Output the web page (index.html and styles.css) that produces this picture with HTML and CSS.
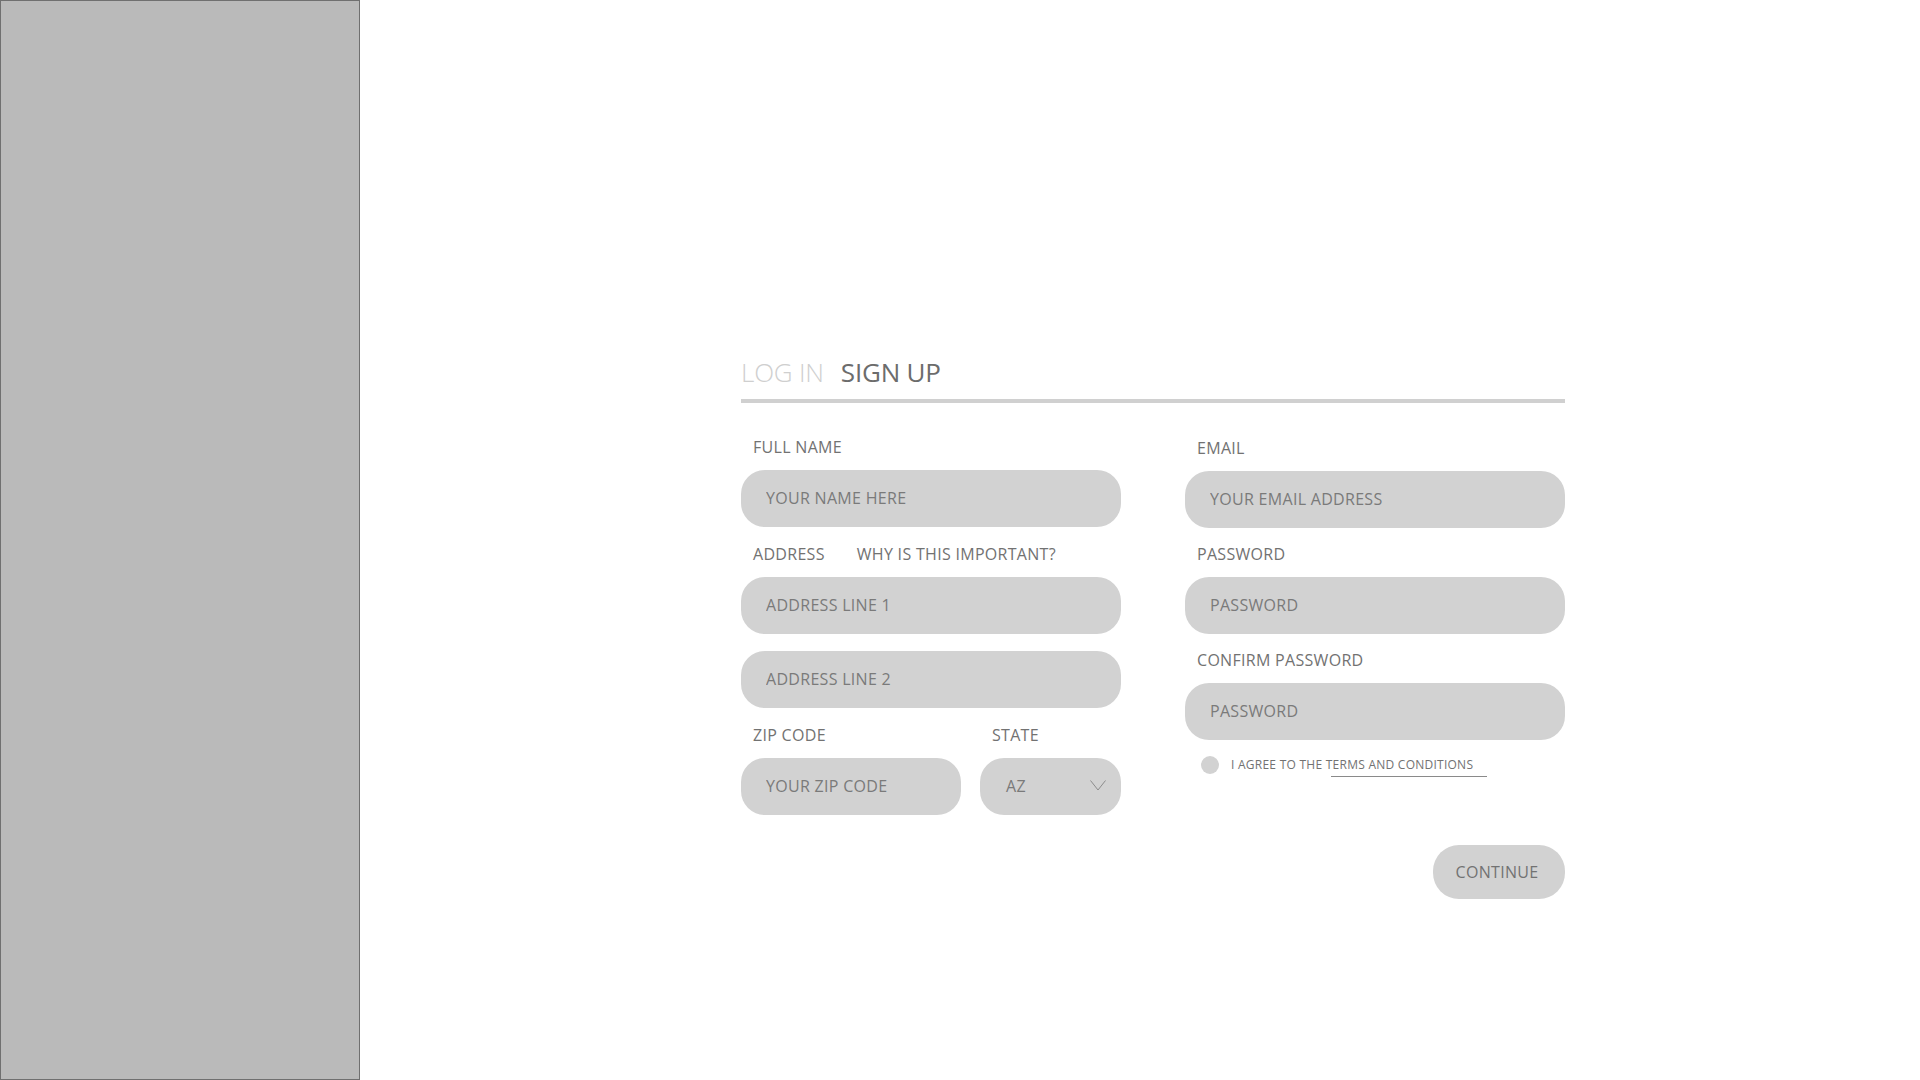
FILE: index.html
```html
<!DOCTYPE html>
<html lang="en">
<head>
<meta charset="utf-8">
<title>Sign up</title>
<link rel="stylesheet" href="styles.css">
</head>
<body>
<div class="page">
  <aside class="sidebar"></aside>
  <main class="main">
    <form class="auth">
      <div class="tabs">
        <span class="tab tab-inactive">LOG IN</span>
        <span class="tab tab-active">SIGN UP</span>
      </div>
      <div class="columns">
        <div class="col col-left">
          <div class="field">
            <div class="label-row"><span class="label">FULL NAME</span></div>
            <input class="pill" type="text" placeholder="YOUR NAME HERE">
          </div>
          <div class="field">
            <div class="label-row"><span class="label">ADDRESS</span><span class="label why">WHY IS THIS IMPORTANT?</span></div>
            <input class="pill" type="text" placeholder="ADDRESS LINE 1">
          </div>
          <div class="field">
            <input class="pill" type="text" placeholder="ADDRESS LINE 2">
          </div>
          <div class="field-row">
            <div class="field zip">
              <div class="label-row"><span class="label">ZIP CODE</span></div>
              <input class="pill" type="text" placeholder="YOUR ZIP CODE">
            </div>
            <div class="field state">
              <div class="label-row"><span class="label">STATE</span></div>
              <div class="pill select">
                <span class="select-value">AZ</span>
                <svg class="chev" width="16" height="11" viewBox="0 0 16 11"><polyline points="0.5,0.5 8,10 15.5,0.5" fill="none" stroke="#8c8c8c" stroke-width="1"/></svg>
              </div>
            </div>
          </div>
        </div>
        <div class="col col-right">
          <div class="field">
            <div class="label-row"><span class="label">EMAIL</span></div>
            <input class="pill" type="email" placeholder="YOUR EMAIL ADDRESS">
          </div>
          <div class="field">
            <div class="label-row"><span class="label">PASSWORD</span></div>
            <input class="pill" type="password" placeholder="PASSWORD">
          </div>
          <div class="field">
            <div class="label-row"><span class="label">CONFIRM PASSWORD</span></div>
            <input class="pill" type="password" placeholder="PASSWORD">
          </div>
          <div class="agree">
            <span class="radio"></span>
            <span class="agree-text">I AGREE TO THE <span class="terms">TERMS AND CONDITIONS</span></span>
          </div>
          <div class="actions">
            <button class="continue" type="button">CONTINUE</button>
          </div>
        </div>
      </div>
    </form>
  </main>
</div>
</body>
</html>
```

FILE: styles.css
```css
* { box-sizing: border-box; }

html, body {
  margin: 0;
  padding: 0;
  background: #ffffff;
  font-family: "Open Sans", "Noto Sans", "Liberation Sans", sans-serif;
  color: #707070;
}

.page {
  display: flex;
  height: 1080px;
}

.sidebar {
  width: 360px;
  flex: 0 0 360px;
  background: #bababa;
  border: 1px solid #707070;
}

.main {
  flex: 1;
  padding-top: 354px;
  padding-left: 381px;
}

.auth {
  width: 824px;
}

.tabs {
  display: flex;
  gap: 17px;
  height: 49px;
  padding-bottom: 9px;
  border-bottom: 4px solid #d0d0d0;
}

.tab {
  font-size: 26px;
  line-height: 36px;
  letter-spacing: -0.2px;
}

.tab-inactive {
  color: #cfcfcf;
  font-weight: 300;
}

.tab-active {
  color: #6c6c6c;
}

.columns {
  display: flex;
  gap: 64px;
  padding-top: 34px;
}

.col {
  width: 380px;
  display: flex;
  flex-direction: column;
}

.col-left { gap: 17px; }

.col-right {
  gap: 16px;
  padding-top: 1px;
}

.field {
  display: flex;
  flex-direction: column;
}

.label-row {
  display: flex;
  gap: 32px;
  padding-left: 12px;
  margin-bottom: 13px;
}

.label {
  font-size: 16px;
  line-height: 20px;
  letter-spacing: 0.3px;
  color: #727272;
}

.pill {
  height: 57px;
  border: none;
  outline: none;
  border-radius: 24px;
  background: #d2d2d2;
  padding: 0 25px 2px;
  font-family: inherit;
  font-size: 16px;
  letter-spacing: 0.3px;
  color: #7a7a7a;
  width: 100%;
}

.pill::placeholder {
  color: #7a7a7a;
  opacity: 1;
}

.field-row {
  display: flex;
  gap: 19px;
}

.zip { width: 220px; }
.state { width: 141px; }

.select {
  display: flex;
  align-items: center;
  justify-content: space-between;
  padding-left: 26px;
  padding-right: 15px;
}

.select-value {
  font-size: 16px;
  letter-spacing: 0.3px;
  color: #7a7a7a;
}

.chev { display: block; }

.agree {
  display: flex;
  align-items: center;
  gap: 12px;
  padding-left: 16px;
  height: 18px;
}

.radio {
  width: 18px;
  height: 18px;
  border-radius: 50%;
  background: #d2d2d2;
  flex: 0 0 18px;
}

.agree-text {
  font-size: 12px;
  line-height: 16px;
  color: #727272;
  letter-spacing: 0.25px;
}

.terms {
  position: relative;
}

.terms::after {
  content: "";
  position: absolute;
  left: 5px;
  right: -14px;
  bottom: -4px;
  height: 1px;
  background: #8a8a8a;
}

.actions {
  display: flex;
  justify-content: flex-end;
  margin-top: 55px;
}

.continue {
  width: 132px;
  height: 54px;
  border: none;
  border-radius: 26px;
  background: #d2d2d2;
  font-family: inherit;
  font-size: 16px;
  letter-spacing: 0.3px;
  color: #727272;
  padding: 0 4px 0 0;
}
```
